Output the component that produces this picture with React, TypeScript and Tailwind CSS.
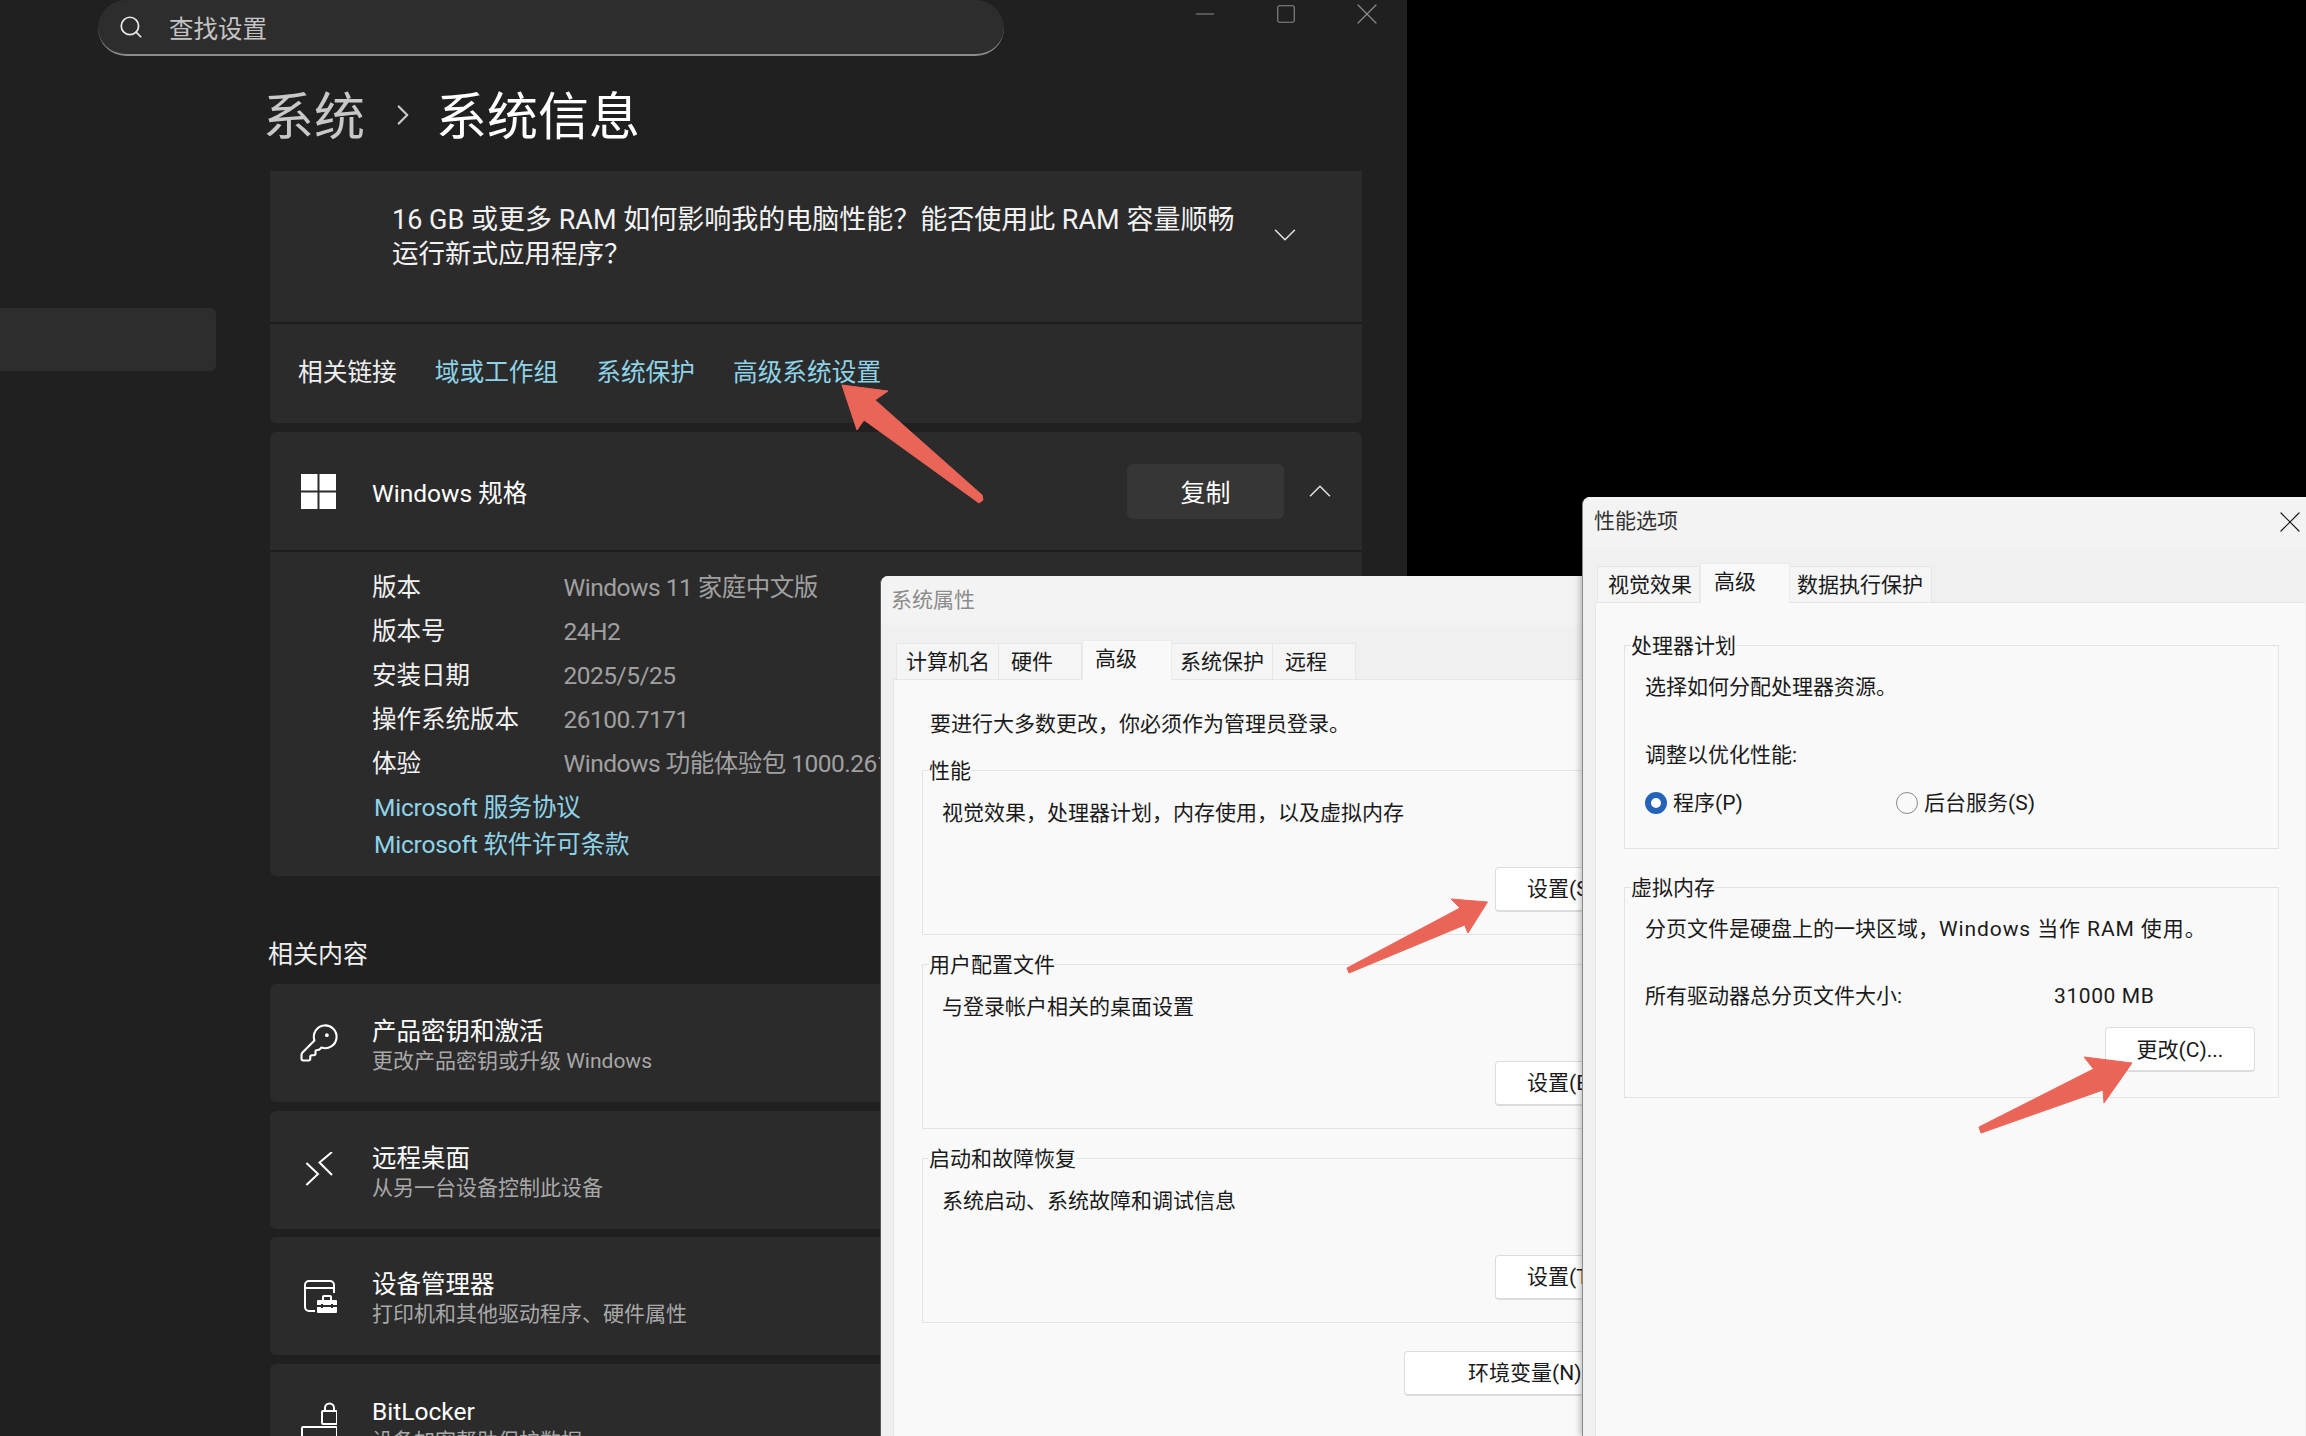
import { ChevronDown, ChevronRight, ChevronUp, KeyRound, Minus, Search, Square, X } from 'lucide-react';
import type { ReactNode } from 'react';

const specs = [
  ['版本', 'Windows 11 家庭中文版'],
  ['版本号', '24H2'],
  ['安装日期', '2025/5/25'],
  ['操作系统版本', '26100.7171'],
  ['体验', 'Windows 功能体验包 1000.26100.265.0'],
];

function WindowsLogo() {
  return (
    <svg width="35" height="35" viewBox="0 0 35 35" className="shrink-0">
      <rect x="0" y="0" width="16.5" height="16.5" fill="#fff" />
      <rect x="18.5" y="0" width="16.5" height="16.5" fill="#fff" />
      <rect x="0" y="18.5" width="16.5" height="16.5" fill="#fff" />
      <rect x="18.5" y="18.5" width="16.5" height="16.5" fill="#fff" />
    </svg>
  );
}

function RemoteIcon() {
  return (
    <svg width="36" height="36" viewBox="0 0 36 36" fill="none" stroke="#fff" strokeWidth="2" className="shrink-0">
      <path d="M5.4 11 17 22l-11.600 11" />
      <path d="M31 0 18.500 10.500 31 23" />
    </svg>
  );
}

function DeviceIcon() {
  return (
    <svg width="36" height="36" viewBox="0 0 36 36" fill="none" className="shrink-0">
      <path d="M14 33H8a4 4 0 0 1-4-4V7a4 4 0 0 1 4-4h21a4 4 0 0 1 4 4v8M4 10h29" stroke="#fff" strokeWidth="2" />
      <path d="M17 22h4v-3a2 2 0 0 1 2-2h6a2 2 0 0 1 2 2v3h4a1 1 0 0 1 1 1v11a1 1 0 0 1-1 1H17a1 1 0 0 1-1-1V23a1 1 0 0 1 1-1z" fill="#fff" />
      <path d="M16 28h20M21 26v4M31 26v4" stroke="#2b2b2b" strokeWidth="2" />
      <path d="M23 22v-3h6v3z" fill="#2b2b2b" />
    </svg>
  );
}

function LockerIcon() {
  return (
    <svg width="36" height="42" viewBox="0 0 36 42" fill="none" stroke="#fff" strokeWidth="2" className="shrink-0">
      <rect x="21" y="9" width="15" height="13" rx="1" />
      <path d="M24 9V6a4.500 4.500 0 0 1 9 0v3" />
      <path d="M1 42V26a1 1 0 0 1 1-1h33a1 1 0 0 1 1 1v16M1 36h35" />
    </svg>
  );
}

function ContentCard({ icon, title, sub }: { icon: ReactNode; title: string; sub: string }) {
  return (
    <div className="flex h-[118px] items-center rounded-md bg-[#2b2b2b] pl-[31px]">
      <div className="flex w-[36px] shrink-0 justify-center">{icon}</div>
      <div className="ml-[35px] pt-[7px]">
        <div className="text-[24.500px] leading-[30px] text-white">{title}</div>
        <div className="text-[21px] leading-[29px] text-[#a8a8a8]">{sub}</div>
      </div>
    </div>
  );
}

function SettingsWindow() {
  return (
    <div className="absolute top-0 left-0 h-[1436px] w-[1407px] overflow-hidden bg-[#202020]">
      <div className="flex h-[55px]">
        <div className="ml-[98px] flex h-[56px] w-[906px] shrink-0 items-center rounded-[28px] border-b-2 border-[#8c8c8c] bg-[#2d2d2d] pl-[20px]">
          <Search size={26} strokeWidth={1.6} className="text-[#e8e8e8]" />
          <span className="ml-[25px] pt-[6px] text-[24.500px] leading-[30px] text-[#c4c4c4]">查找设置</span>
        </div>
        <div className="ml-[160px] flex h-[28px] text-[#8b8b8b]">
          <div className="flex w-[81px] items-center justify-center"><Minus size={30} strokeWidth={0.9} /></div>
          <div className="flex w-[81px] items-center justify-center"><Square size={22} strokeWidth={1.2} /></div>
          <div className="flex w-[81px] items-center justify-center"><X size={36} strokeWidth={0.8} /></div>
        </div>
      </div>
      <div className="flex">
        <div className="w-[270px] shrink-0 pt-[253px]">
          <div className="h-[63px] w-[216px] rounded-r-md bg-[#2d2d2d]" />
        </div>
        <div className="w-[1092px]">
          <div className="flex h-[116px] items-center text-[51px] leading-[60px]">
            <span className="-ml-[7px] pt-[10px] text-[#c8c8c8]">系统</span>
            <ChevronRight size={34} strokeWidth={1.6} className="mt-[4px] mr-[16px] ml-[21px] text-[#c8c8c8]" />
            <span className="pt-[10px] text-white">系统信息</span>
          </div>

          {/* FAQ + related links */}
          <div className="flex h-[153px] items-start border-b-2 border-[#1d1d1d] bg-[#2b2b2b] pt-[33px] pl-[122px]">
            <div className="w-[600px] flex-1 text-[27px] leading-[33px] text-[#f2f2f2]">
              <div className="whitespace-nowrap">16 GB 或更多 RAM 如何影响我的电脑性能？能否使用此 RAM 容量顺畅</div>
              <div className="text-[26.500px]">运行新式应用程序？</div>
            </div>
            <ChevronDown size={38} strokeWidth={1} className="mt-[12px] mr-[58px] ml-[17px] text-[#e0e0e0]" />
          </div>
          <div className="flex h-[99px] items-center gap-[38px] rounded-b-md bg-[#2b2b2b] pb-[2px] pl-[28px] text-[24.700px] leading-[32px] text-[#8fd3e8]">
            <span className="text-[#efefef]">相关链接</span>
            <span>域或工作组</span>
            <span>系统保护</span>
            <span>高级系统设置</span>
          </div>

          {/* Windows specs */}
          <div className="mt-[9px] rounded-md bg-[#2b2b2b]">
            <div className="flex h-[120px] items-center border-b-2 border-[#1d1d1d] pl-[31px]">
              <WindowsLogo />
              <span className="ml-[36px] flex-1 pt-[5px] text-[24.500px] leading-[32px] text-white">Windows 规格</span>
              <div className="flex h-[55px] w-[157px] items-center justify-center rounded-md bg-[#363636] pt-[5px] text-[25px] text-white">复制</div>
              <ChevronUp size={38} strokeWidth={1} className="mr-[23px] ml-[17px] text-[#e0e0e0]" />
            </div>
            <div className="h-[324px] pt-[14px] pl-[102px] text-[24.500px]">
              {specs.map(([k, v]) => (
                <div key={k} className="flex h-[44px] items-center whitespace-nowrap">
                  <span className="w-[191.500px] text-[#f2f2f2]">{k}</span>
                  <span className="tracking-[-0.5px] text-[#a0a0a0]">{v}</span>
                </div>
              ))}
              <div className="ml-[2px] pt-[3px] text-[24.500px] leading-[37px] tracking-[-0.2px] text-[#8fd3e8]">
                <div>Microsoft 服务协议</div>
                <div>Microsoft 软件许可条款</div>
              </div>
            </div>
          </div>

          {/* Related */}
          <div className="mt-[57px] mb-[7px] -ml-[2px] text-[25px] leading-[44px] text-[#efefef]">相关内容</div>
          <div className="flex flex-col gap-[8.670px]">
            <ContentCard icon={<KeyRound size={42} strokeWidth={1.2} className="shrink-0 text-white" />} title="产品密钥和激活" sub="更改产品密钥或升级 Windows" />
            <ContentCard icon={<RemoteIcon />} title="远程桌面" sub="从另一台设备控制此设备" />
            <ContentCard icon={<DeviceIcon />} title="设备管理器" sub="打印机和其他驱动程序、硬件属性" />
            <ContentCard icon={<LockerIcon />} title="BitLocker" sub="设备加密帮助保护数据" />
          </div>
        </div>
      </div>
    </div>
  );
}

function Tab({ label, active, width, pad }: { label: string; active?: boolean; width: string; pad: string }) {
  if (active) {
    return (
      <div className={`relative z-10 -mb-px h-[40px] border-x border-t border-[#ebebeb] bg-[#f9f9f9] pt-[3px] text-[21px] leading-[30px] text-[#1a1a1a] ${width} ${pad}`}>
        {label}
      </div>
    );
  }
  return (
    <div className={`h-[36px] border-t border-r border-[#e6e6e6] bg-[#f5f5f5] pt-[3px] text-[21px] leading-[30px] whitespace-nowrap text-[#1a1a1a] ${width} ${pad}`}>
      {label}
    </div>
  );
}

function Group({ title, className, children }: { title: string; className: string; children: ReactNode }) {
  return (
    <div className={`relative border border-[#e3e3e3] ${className}`}>
      <div className="absolute -top-[14px] left-[6px] bg-[#f9f9f9] text-[21px] leading-[28px] text-[#1a1a1a]">{title}</div>
      {children}
    </div>
  );
}

function DialogButton({ children, className }: { children: ReactNode; className: string }) {
  return (
    <div className={`flex h-[45px] items-center rounded-[4px] border border-b-2 border-[#dcdcdc] bg-white pt-[2px] text-[21px] whitespace-nowrap text-[#1a1a1a] ${className}`}>
      {children}
    </div>
  );
}

function SystemProps() {
  const groups = [
    { title: '性能', desc: '视觉效果，处理器计划，内存使用，以及虚拟内存', btn: '设置(S)...', mt: 'mt-[31px]' },
    { title: '用户配置文件', desc: '与登录帐户相关的桌面设置', btn: '设置(E)...', mt: 'mt-[29px]' },
    { title: '启动和故障恢复', desc: '系统启动、系统故障和调试信息', btn: '设置(T)...', mt: 'mt-[29px]' },
  ];
  return (
    <div className="absolute top-[576px] left-[880px] flex h-[860px] w-[702px] flex-col overflow-hidden rounded-tl-lg border-l border-[#555] bg-[#f0f0f0]">
      <div className="flex h-[49px] items-center bg-[#f3f3f3] pl-[10px] text-[21px] text-[#8c8c8c]">系统属性</div>
      <div className="flex h-[54px] items-end pl-[15px]">
        <Tab label="计算机名" width="w-[103px]" pad="pl-[9px] border-l" />
        <Tab label="硬件" width="w-[83px]" pad="pl-[12px]" />
        <Tab label="高级" active width="w-[90px]" pad="pl-[12px]" />
        <Tab label="系统保护" width="w-[101px]" pad="pl-[8px]" />
        <Tab label="远程" width="w-[83px]" pad="pl-[12px]" />
      </div>
      <div className="ml-[12px] flex-1 border-t border-l border-[#e6e6e6] bg-[#f9f9f9]">
        <div className="pt-[29px] pl-[36px] text-[21px] leading-[30px] text-[#1a1a1a]">要进行大多数更改，你必须作为管理员登录。</div>
        {groups.map((g) => (
          <Group key={g.title} title={g.title} className={`ml-[28px] h-[165px] w-[900px] ${g.mt}`}>
            <div className="pt-[27px] pl-[19px] text-[21px] leading-[30px] text-[#1a1a1a]">{g.desc}</div>
            <DialogButton className="mt-[39px] ml-[572px] w-[150px] pl-[31px]">{g.btn}</DialogButton>
          </Group>
        ))}
        <DialogButton className="mt-[28px] ml-[510px] w-[220px] pl-[63px]">环境变量(N)...</DialogButton>
      </div>
    </div>
  );
}

function Radio({ checked }: { checked?: boolean }) {
  if (checked) {
    return <div className="h-[22px] w-[22px] shrink-0 rounded-full border-[6px] border-[#2563b8] bg-white" />;
  }
  return <div className="h-[22px] w-[22px] shrink-0 rounded-full border border-[#8a8a8a] bg-[#f9f9f9]" />;
}

function PerfOptions() {
  return (
    <div className="absolute top-[497px] left-[1582px] flex h-[939px] w-[724px] flex-col overflow-hidden rounded-tl-lg border-l border-[#8a8a8a] bg-[#f0f0f0] shadow-[-2px_0_6px_rgba(0,0,0,0.25)]">
      <div className="flex h-[51px] items-center justify-between bg-[#f3f3f3] pb-[1px] pl-[11px] text-[21px] text-[#333]">
        性能选项
        <X size={36} strokeWidth={0.8} className="-mr-[2px] text-[#1a1a1a]" />
      </div>
      <div className="flex h-[54px] items-end pl-[14px]">
        <Tab label="视觉效果" width="w-[103px]" pad="pl-[10px] border-l" />
        <Tab label="高级" active width="w-[90px]" pad="pl-[13px]" />
        <Tab label="数据执行保护" width="w-[142px]" pad="pl-[7px]" />
      </div>
      <div className="mr-px ml-[12px] flex-1 border-t border-l border-[#e6e6e6] bg-[#f9f9f9] text-[21px] leading-[30px] text-[#1a1a1a]">
        <Group title="处理器计划" className="mt-[42px] ml-[28px] h-[204px] w-[655px]">
          <div className="pt-[26px] pl-[20px]">选择如何分配处理器资源。</div>
          <div className="mt-[38px] pl-[20px]">调整以优化性能:</div>
          <div className="mt-[18px] flex items-center pl-[20px]">
            <Radio checked />
            <span className="ml-[6px] w-[223px]">程序(P)</span>
            <Radio />
            <span className="ml-[6px]">后台服务(S)</span>
          </div>
        </Group>
        <Group title="虚拟内存" className="mt-[38px] ml-[28px] h-[211px] w-[655px]">
          <div className="pt-[26px] pl-[20px]">
            分页文件是硬盘上的一块区域，<span className="tracking-[0.9px]">Windows 当作 RAM 使用。</span>
          </div>
          <div className="mt-[37px] flex pl-[20px]">
            <span className="w-[409px]">所有驱动器总分页文件大小:</span>
            <span className="tracking-[0.6px]">31000 MB</span>
          </div>
          <div className="mt-[16px] flex justify-end pr-[23px]">
            <DialogButton className="w-[150px] justify-center">更改(C)...</DialogButton>
          </div>
        </Group>
      </div>
    </div>
  );
}

function Arrows() {
  return (
    <svg width="2306" height="1436" viewBox="0 0 2306 1436" className="pointer-events-none absolute top-0 left-0" fill="#ea6557" stroke="#ea6557" strokeWidth="1" strokeLinejoin="round">
      <path d="M842 385 888 391 875 400 982 495 983 500 979 503 864 420 857 430Z" />
      <path d="M1487.500 902 1451 899 1460 908 1347 968 1349 973 1464.600 925 1468 933Z" />
      <path d="M2132 1063 2084 1057 2093.500 1069 1979 1127 1981 1133 2103 1090 2104 1103Z" />
    </svg>
  );
}

export default function App() {
  return (
    <div className="relative h-[1436px] w-[2306px] overflow-hidden bg-black font-['Roboto','Noto_Sans_CJK_SC',sans-serif]">
      <SettingsWindow />
      <SystemProps />
      <PerfOptions />
      <Arrows />
    </div>
  );
}
